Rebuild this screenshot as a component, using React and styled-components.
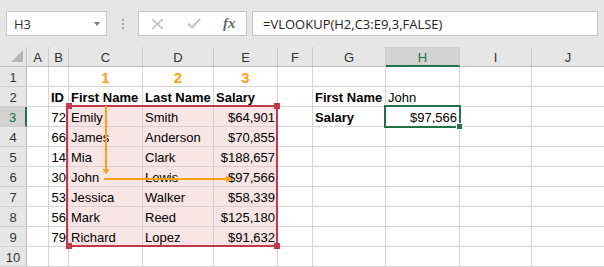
import React from 'react';
import styled, { createGlobalStyle } from 'styled-components';

const GlobalStyle = createGlobalStyle`
    body {
        margin: 0;
        background: #ffffff;
        font-family: 'Liberation Sans', Arial, sans-serif;
    }
`;

const COLS = [27, 22, 20, 74, 71, 64, 35, 73, 74, 72, 73];
const LETTERS = ['A', 'B', 'C', 'D', 'E', 'F', 'G', 'H', 'I', 'J'];
const ORANGE = '#ffa012';
const RED = '#c2394a';
const GREEN = '#217346';

const people = [
    [72, 'Emily', 'Smith', '$64,901'],
    [66, 'James', 'Anderson', '$70,855'],
    [14, 'Mia', 'Clark', '$188,657'],
    [30, 'John', 'Lewis', '$97,566'],
    [53, 'Jessica', 'Walker', '$58,339'],
    [56, 'Mark', 'Reed', '$125,180'],
    [79, 'Richard', 'Lopez', '$91,632'],
];

const rows = [
    {
        C: { t: '1', orange: true },
        D: { t: '2', orange: true },
        E: { t: '3', orange: true },
    },
    {
        B: { t: 'ID', bold: true },
        C: { t: 'First Name', bold: true },
        D: { t: 'Last Name', bold: true },
        E: { t: 'Salary', bold: true },
        G: { t: 'First Name', bold: true },
        H: { t: 'John' },
    },
    ...people.map(([id, first, last, salary]) => ({
        B: { t: String(id), align: 'right' },
        C: { t: first, fill: true },
        D: { t: last, fill: true },
        E: { t: salary, align: 'right', fill: true },
    })),
    {},
];
rows[2].G = { t: 'Salary', bold: true };
rows[2].H = { t: '$97,566', align: 'right' };

const Window = styled.div`
    width: 604px;
    height: 267px;
    overflow: hidden;
    background: #e6e6e6;
`;

const Toolbar = styled.div`
    height: 47px;
    box-sizing: border-box;
    padding: 11px 0 0 6px;
    display: flex;
    align-items: flex-start;
    font-family: 'Open Sans', sans-serif;
    font-size: 13px;
    color: #333;
`;

const NameBox = styled.div`
    width: 101px;
    height: 25px;
    box-sizing: border-box;
    border: 1px solid #c6c6c6;
    background: #fff;
    display: flex;
    align-items: center;
    justify-content: space-between;
    padding: 0 6px 0 7px;
`;

const Caret = styled.span`
    width: 0;
    height: 0;
    border-left: 3.5px solid transparent;
    border-right: 3.5px solid transparent;
    border-top: 4px solid #777;
`;

const Grip = styled.div`
    width: 31px;
    height: 25px;
    display: flex;
    flex-direction: column;
    align-items: center;
    justify-content: center;
    gap: 2px;
`;

const Dot = styled.span`
    width: 2px;
    height: 2px;
    background: #a0a0a0;
`;

const FxBox = styled.div`
    width: 109px;
    height: 25px;
    box-sizing: border-box;
    border: 1px solid #c6c6c6;
    background: #fff;
    display: flex;
    align-items: center;
    padding-left: 12px;
    gap: 23px;
`;

const FxLabel = styled.span`
    font-family: 'Liberation Serif', serif;
    font-style: italic;
    font-weight: bold;
    font-size: 15px;
    color: #6a6a6a;
    margin-left: -1px;
`;

const FormulaInput = styled.div`
    width: 346px;
    height: 25px;
    margin-left: 5px;
    box-sizing: border-box;
    border: 1px solid #c6c6c6;
    background: #fff;
    display: flex;
    align-items: center;
    padding-left: 10px;
    color: #222;
`;

const Sheet = styled.div`
    position: relative;
    display: grid;
    grid-template-columns: ${COLS.map((c) => `${c}px`).join(' ')};
    grid-auto-rows: 20px;
    font-size: 13px;
`;

const Corner = styled.div`
    box-sizing: border-box;
    border-right: 1px solid #c2c2c2;
    border-bottom: 1px solid #bdbdbd;
    position: relative;

    &::after {
        content: '';
        position: absolute;
        right: 3px;
        bottom: 4px;
        border-left: 12px solid transparent;
        border-bottom: 12px solid #b7b7b7;
    }
`;

const ColHead = styled.div`
    box-sizing: border-box;
    border-right: 1px solid #cbcbcb;
    border-bottom: ${({ $active }) => ($active ? `2px solid ${GREEN}` : '1px solid #bdbdbd')};
    background: ${({ $active }) => ($active ? '#d2d2d2' : '#e6e6e6')};
    color: ${({ $active }) => ($active ? GREEN : '#333')};
    text-align: center;
    padding-top: 2px;
    line-height: 17px;
`;

const RowHead = styled.div`
    box-sizing: border-box;
    border-right: ${({ $active }) => ($active ? `2px solid ${GREEN}` : '1px solid #bdbdbd')};
    border-bottom: 1px solid #d0d0d0;
    background: ${({ $active }) => ($active ? '#d2d2d2' : '#e6e6e6')};
    color: ${({ $active }) => ($active ? GREEN : '#333')};
    text-align: center;
    padding-top: 2px;
    line-height: 17px;
`;

const Cell = styled.div`
    box-sizing: border-box;
    border-right: 1px solid ${({ $fill }) => ($fill ? '#dccece' : '#d4d4d4')};
    border-bottom: 1px solid ${({ $fill }) => ($fill ? '#dccece' : '#d4d4d4')};
    background: ${({ $fill }) => ($fill ? '#f8e5e5' : '#fff')};
    padding: 2px 2px 0 2px;
    line-height: 17px;
    white-space: nowrap;
    text-align: ${({ $align }) => $align};
    font-size: ${({ $orange }) => ($orange ? '15px' : '13px')};
    font-weight: ${({ $bold, $orange }) => ($bold || $orange ? 'bold' : 'normal')};
    color: ${({ $orange }) => ($orange ? ORANGE : '#000')};
`;

const RangeBox = styled.div`
    position: absolute;
    left: 66px;
    top: 58px;
    width: 212px;
    height: 142px;
    box-sizing: border-box;
    border: 2px solid ${RED};
    pointer-events: none;
`;

const Handle = styled.div`
    position: absolute;
    width: 6px;
    height: 6px;
    background: ${RED};
    left: ${({ $x }) => $x}px;
    top: ${({ $y }) => $y}px;
`;

const SelectBox = styled.div`
    position: absolute;
    left: 384px;
    top: 58px;
    width: 77px;
    height: 23px;
    box-sizing: border-box;
    border: 2px solid ${GREEN};
`;

const FillHandle = styled.div`
    position: absolute;
    left: 456px;
    top: 76px;
    width: 5px;
    height: 5px;
    background: ${GREEN};
    border: 1px solid #fff;
`;

const Arrows = styled.svg`
    position: absolute;
    left: 0;
    top: 0;
    pointer-events: none;
`;

function ToolIcons() {
    return (
        <>
            <svg width="13" height="12" viewBox="0 0 13 12">
                <path d="M1 1 L12 11 M12 1 L1 11" stroke="#bcbcbc" strokeWidth="1.6" fill="none" />
            </svg>
            <svg width="14" height="11" viewBox="0 0 14 11">
                <path d="M1 5.5 L5 9.5 L13 1" stroke="#c2c2c2" strokeWidth="2" fill="none" />
            </svg>
            <FxLabel>fx</FxLabel>
        </>
    );
}

export default function App() {
    return (
        <Window>
            <GlobalStyle />
            <Toolbar>
                <NameBox>
                    H3
                    <Caret />
                </NameBox>
                <Grip>
                    <Dot />
                    <Dot />
                    <Dot />
                </Grip>
                <FxBox>
                    <ToolIcons />
                </FxBox>
                <FormulaInput>=VLOOKUP(H2,C3:E9,3,FALSE)</FormulaInput>
            </Toolbar>

            <Sheet>
                <Corner />
                {LETTERS.map((l) => (
                    <ColHead key={l} $active={l === 'H'}>
                        {l}
                    </ColHead>
                ))}
                {rows.map((row, i) => (
                    <React.Fragment key={i}>
                        <RowHead $active={i === 2}>{i + 1}</RowHead>
                        {LETTERS.map((l) => {
                            const c = row[l] || {};
                            return (
                                <Cell
                                    key={l}
                                    $align={c.orange ? 'center' : c.align || 'left'}
                                    $bold={c.bold}
                                    $orange={c.orange}
                                    $fill={c.fill}
                                >
                                    {c.t}
                                </Cell>
                            );
                        })}
                    </React.Fragment>
                ))}

                <RangeBox />
                <Handle $x={66} $y={56} />
                <Handle $x={274} $y={56} />
                <Handle $x={66} $y={196} />
                <Handle $x={274} $y={196} />

                <SelectBox />
                <FillHandle />

                <Arrows width="300" height="160" viewBox="0 0 300 160">
                    <line x1="106" y1="59" x2="106" y2="123" stroke={ORANGE} strokeWidth="2" />
                    <polygon points="102.5,122 109.5,122 106,127.5" fill={ORANGE} />
                    <line x1="104" y1="132" x2="227" y2="132" stroke={ORANGE} strokeWidth="2" />
                    <polygon points="226,128.5 226,135.5 233,132" fill={ORANGE} />
                </Arrows>
            </Sheet>
        </Window>
    );
}
